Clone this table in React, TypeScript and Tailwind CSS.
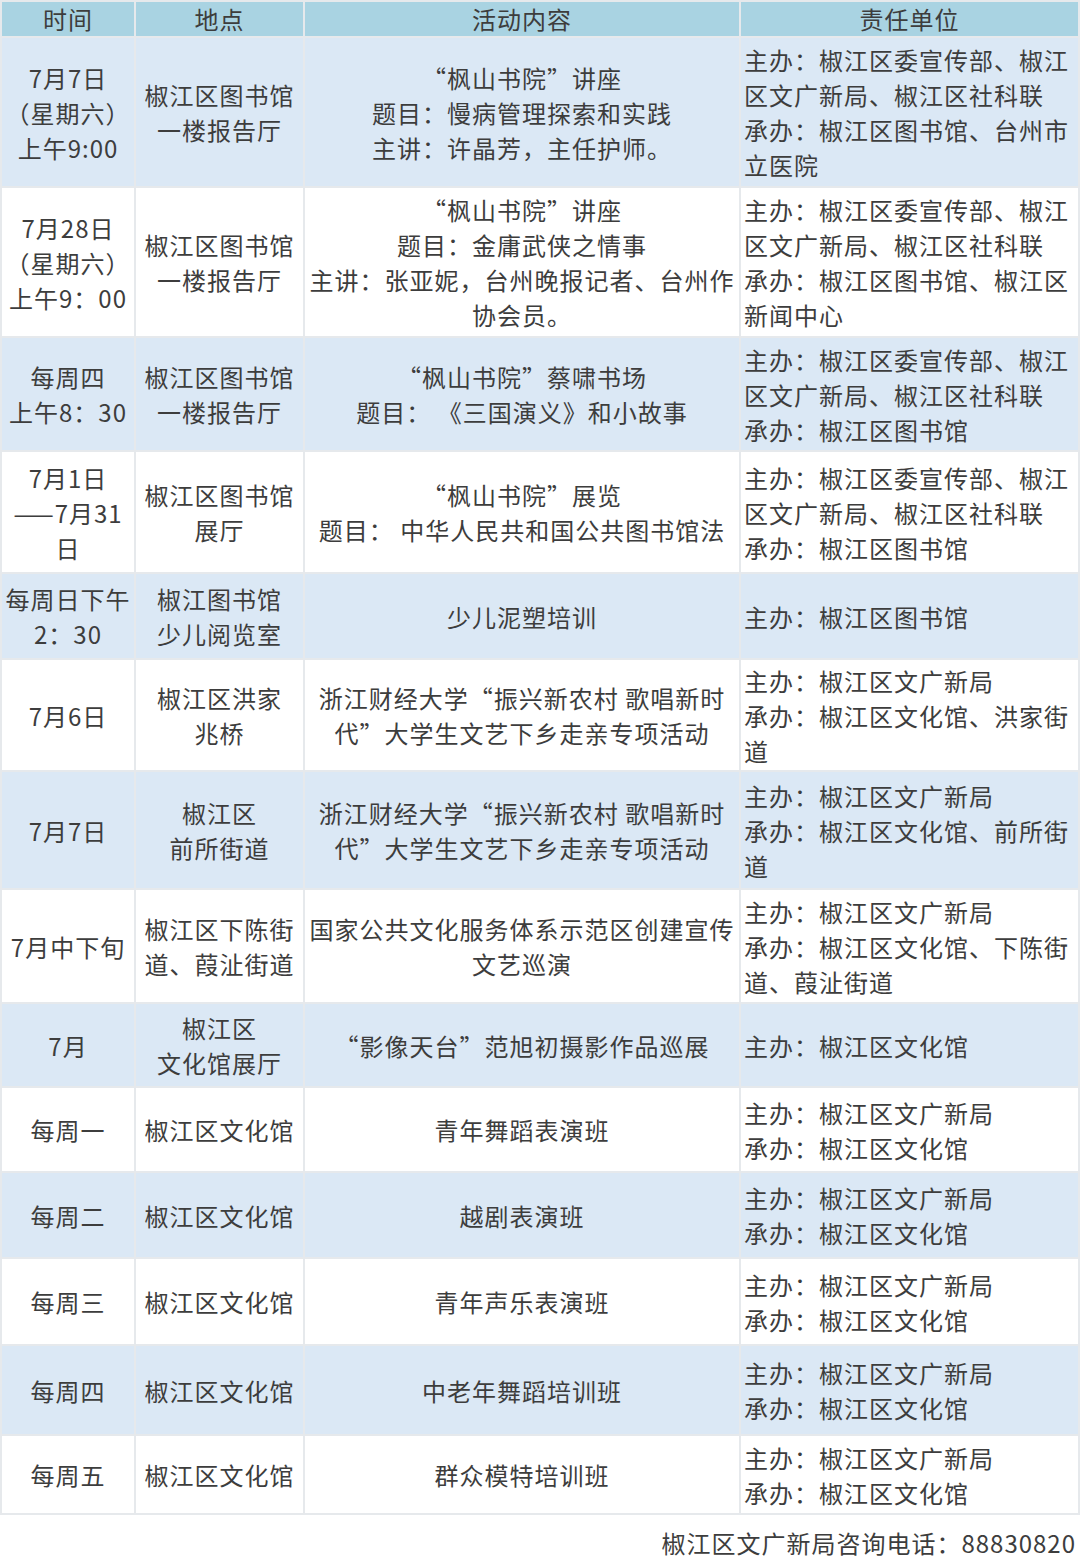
const FONT = "font-['Noto_Sans_CJK_SC','Noto_Sans',sans-serif]";

type Row = {
  h: number;
  blue: boolean;
  time: string[];
  place: string[];
  content: string[];
  unit: string[];
};

const ROWS: Row[] = [
  {
    h: 148,
    blue: true,
    time: ["7月7日", "（星期六）", "上午9:00"],
    place: ["椒江区图书馆", "一楼报告厅"],
    content: ["“枫山书院”讲座", "题目：慢病管理探索和实践", "主讲：许晶芳，主任护师。"],
    unit: ["主办：椒江区委宣传部、椒江", "区文广新局、椒江区社科联", "承办：椒江区图书馆、台州市", "立医院"],
  },
  {
    h: 148,
    blue: false,
    time: ["7月28日", "（星期六）", "上午9：00"],
    place: ["椒江区图书馆", "一楼报告厅"],
    content: ["“枫山书院”讲座", "题目：金庸武侠之情事", "主讲：张亚妮，台州晚报记者、台州作", "协会员。"],
    unit: ["主办：椒江区委宣传部、椒江", "区文广新局、椒江区社科联", "承办：椒江区图书馆、椒江区", "新闻中心"],
  },
  {
    h: 112,
    blue: true,
    time: ["每周四", "上午8：30"],
    place: ["椒江区图书馆", "一楼报告厅"],
    content: ["“枫山书院”蔡啸书场", "题目： 《三国演义》和小故事"],
    unit: ["主办：椒江区委宣传部、椒江", "区文广新局、椒江区社科联", "承办：椒江区图书馆"],
  },
  {
    h: 120,
    blue: false,
    time: ["7月1日", "——7月31", "日"],
    place: ["椒江区图书馆", "展厅"],
    content: ["“枫山书院”展览", "题目： 中华人民共和国公共图书馆法"],
    unit: ["主办：椒江区委宣传部、椒江", "区文广新局、椒江区社科联", "承办：椒江区图书馆"],
  },
  {
    h: 84,
    blue: true,
    time: ["每周日下午", "2：30"],
    place: ["椒江图书馆", "少儿阅览室"],
    content: ["少儿泥塑培训"],
    unit: ["主办：椒江区图书馆"],
  },
  {
    h: 110,
    blue: false,
    time: ["7月6日"],
    place: ["椒江区洪家", "兆桥"],
    content: ["浙江财经大学“振兴新农村 歌唱新时", "代”大学生文艺下乡走亲专项活动"],
    unit: ["主办：椒江区文广新局", "承办：椒江区文化馆、洪家街", "道"],
  },
  {
    h: 116,
    blue: true,
    time: ["7月7日"],
    place: ["椒江区", "前所街道"],
    content: ["浙江财经大学“振兴新农村 歌唱新时", "代”大学生文艺下乡走亲专项活动"],
    unit: ["主办：椒江区文广新局", "承办：椒江区文化馆、前所街", "道"],
  },
  {
    h: 112,
    blue: false,
    time: ["7月中下旬"],
    place: ["椒江区下陈街", "道、葭沚街道"],
    content: ["国家公共文化服务体系示范区创建宣传", "文艺巡演"],
    unit: ["主办：椒江区文广新局", "承办：椒江区文化馆、下陈街", "道、葭沚街道"],
  },
  {
    h: 82,
    blue: true,
    time: ["7月"],
    place: ["椒江区", "文化馆展厅"],
    content: ["“影像天台”范旭初摄影作品巡展"],
    unit: ["主办：椒江区文化馆"],
  },
  {
    h: 83,
    blue: false,
    time: ["每周一"],
    place: ["椒江区文化馆"],
    content: ["青年舞蹈表演班"],
    unit: ["主办：椒江区文广新局", "承办：椒江区文化馆"],
  },
  {
    h: 84,
    blue: true,
    time: ["每周二"],
    place: ["椒江区文化馆"],
    content: ["越剧表演班"],
    unit: ["主办：椒江区文广新局", "承办：椒江区文化馆"],
  },
  {
    h: 85,
    blue: false,
    time: ["每周三"],
    place: ["椒江区文化馆"],
    content: ["青年声乐表演班"],
    unit: ["主办：椒江区文广新局", "承办：椒江区文化馆"],
  },
  {
    h: 88,
    blue: true,
    time: ["每周四"],
    place: ["椒江区文化馆"],
    content: ["中老年舞蹈培训班"],
    unit: ["主办：椒江区文广新局", "承办：椒江区文化馆"],
  },
  {
    h: 77,
    blue: false,
    time: ["每周五"],
    place: ["椒江区文化馆"],
    content: ["群众模特培训班"],
    unit: ["主办：椒江区文广新局", "承办：椒江区文化馆"],
  },
];

const COLS = "grid grid-cols-[132px_167px_434px_337px] gap-[2px]";

function Cell({
  lines,
  blue,
  left,
}: {
  lines: string[];
  blue: boolean;
  left?: boolean;
}) {
  return (
    <div
      className={`flex flex-col justify-center overflow-hidden leading-[35px] ${
        left ? "items-start pl-[3px]" : "items-center text-center"
      } ${blue ? "bg-[#dbe8f5]" : "bg-white"}`}
    >
      {lines.map((l, i) => (
        <div key={i} className="whitespace-pre">
          {l}
        </div>
      ))}
    </div>
  );
}

export default function App() {
  return (
    <div className={`w-[1080px] bg-white text-[24px] tracking-[1px] text-[#3d3d3d] ${FONT}`}>
      <div className="flex flex-col gap-[2px] bg-[#e6e9ec] p-[2px]">
        <div className={`${COLS} h-[34px]`}>
          {["时间", "地点", "活动内容", "责任单位"].map((h) => (
            <div
              key={h}
              className="flex items-center justify-center bg-[#a9d3e2] leading-[34px]"
            >
              {h}
            </div>
          ))}
        </div>
        {ROWS.map((r, i) => (
          <div key={i} className={COLS} style={{ height: r.h }}>
            <Cell lines={r.time} blue={r.blue} />
            <Cell lines={r.place} blue={r.blue} />
            <Cell lines={r.content} blue={r.blue} />
            <Cell lines={r.unit} blue={r.blue} left />
          </div>
        ))}
      </div>
      <div className="flex h-[56px] items-center justify-end pr-[4px]">
        椒江区文广新局咨询电话：88830820
      </div>
    </div>
  );
}
